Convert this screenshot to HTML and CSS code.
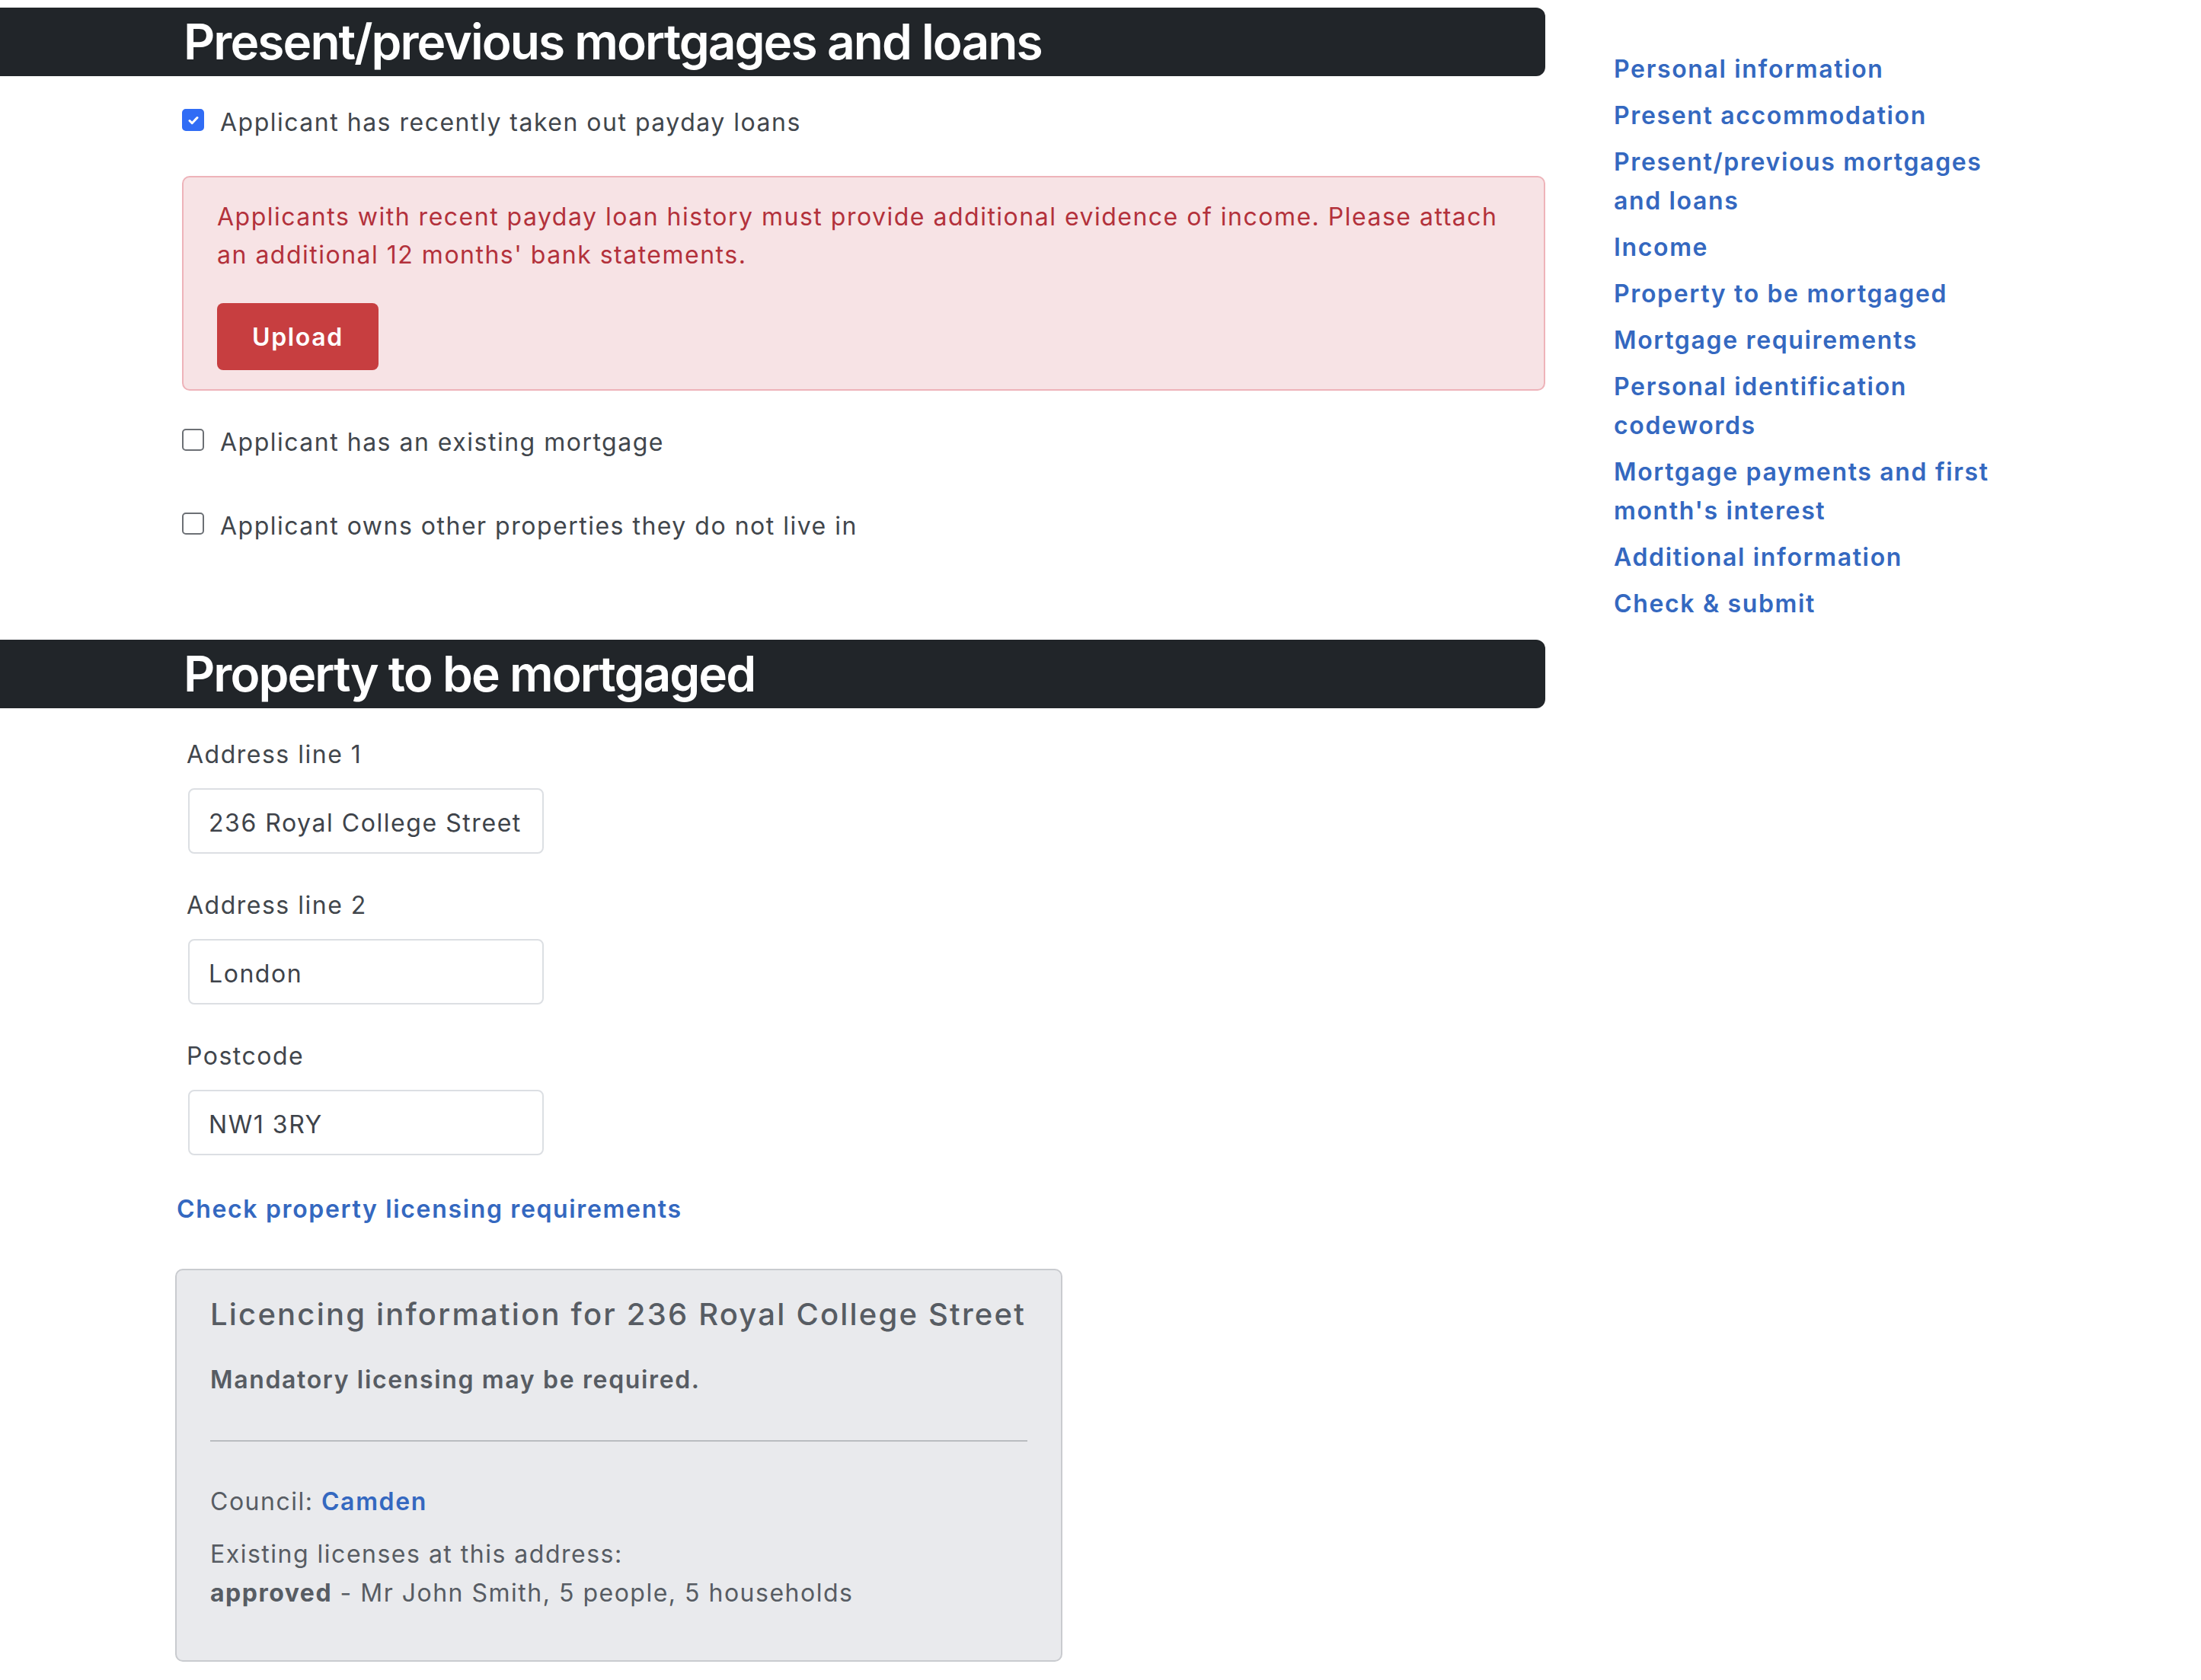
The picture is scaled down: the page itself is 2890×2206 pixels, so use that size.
FILE: index.html
```html
<!DOCTYPE html>
<html lang="en">
<head>
<meta charset="utf-8">
<title>Mortgage application</title>
<link rel="stylesheet" href="styles.css">
</head>
<body>
<div class="page">
  <main class="main">
    <section class="section">
      <h2 class="section-title">Present/previous mortgages and loans</h2>
      <div class="section-body">
        <label class="check check-first">
          <span class="box box-on"><svg viewBox="0 0 20 20" width="20" height="20"><path d="M5 10.5l3.2 3.2L15 6.5" fill="none" stroke="#fff" stroke-width="3" stroke-linecap="round" stroke-linejoin="round"/></svg></span>
          <span class="check-text">Applicant has recently taken out payday loans</span>
        </label>
        <div class="alert">
          <p class="alert-text">Applicants with recent payday loan history must provide additional evidence of income. Please attach an additional 12 months' bank statements.</p>
          <button class="btn-upload" type="button">Upload</button>
        </div>
        <label class="check check-second">
          <span class="box"></span>
          <span class="check-text">Applicant has an existing mortgage</span>
        </label>
        <label class="check check-third">
          <span class="box"></span>
          <span class="check-text">Applicant owns other properties they do not live in</span>
        </label>
      </div>
    </section>

    <section class="section section-property">
      <h2 class="section-title">Property to be mortgaged</h2>
      <div class="property-body">
        <div class="fields">
          <div class="field">
            <label class="field-label">Address line 1</label>
            <input class="field-input" type="text" value="236 Royal College Street">
          </div>
          <div class="field">
            <label class="field-label">Address line 2</label>
            <input class="field-input" type="text" value="London">
          </div>
          <div class="field">
            <label class="field-label">Postcode</label>
            <input class="field-input" type="text" value="NW1 3RY">
          </div>
        </div>
        <a class="licence-link" href="#">Check property licensing requirements</a>
        <div class="card">
          <h3 class="card-title">Licencing information for 236 Royal College Street</h3>
          <p class="card-sub">Mandatory licensing may be required.</p>
          <hr class="card-rule">
          <p class="card-council">Council: <a class="card-link" href="#">Camden</a></p>
          <p class="card-existing">Existing licenses at this address:<br><strong class="card-strong">approved</strong> - Mr John Smith, 5 people, 5 households</p>
        </div>
      </div>
    </section>
  </main>

  <nav class="sidebar">
    <a class="side-link" href="#">Personal information</a>
    <a class="side-link" href="#">Present accommodation</a>
    <a class="side-link" href="#">Present/previous mortgages and loans</a>
    <a class="side-link" href="#">Income</a>
    <a class="side-link" href="#">Property to be mortgaged</a>
    <a class="side-link" href="#">Mortgage requirements</a>
    <a class="side-link" href="#">Personal identification codewords</a>
    <a class="side-link" href="#">Mortgage payments and first month's interest</a>
    <a class="side-link" href="#">Additional information</a>
    <a class="side-link" href="#">Check &amp; submit</a>
  </nav>
</div>
</body>
</html>
```

FILE: styles.css
```css
* { box-sizing: border-box; }

body {
  margin: 0;
  background: #ffffff;
  font-family: Inter, "Noto Sans", sans-serif;
  font-size: 32px;
  line-height: 51px;
  letter-spacing: 1.5px;
  color: #41464c;
}

.page {
  display: flex;
  align-items: flex-start;
}

.main {
  flex: none;
  width: 2029px;
  padding-top: 10px;
}

.section-title {
  margin: 0;
  height: 90px;
  line-height: 90px;
  padding-left: 241px;
  background: #212529;
  color: #ffffff;
  font-size: 64px;
  font-weight: 600;
  letter-spacing: -1.95px;
  border-radius: 0 12px 12px 0;
}

.section-body {
  padding-left: 239px;
}

.check {
  display: flex;
  align-items: flex-start;
  gap: 21px;
  cursor: pointer;
}

.box {
  flex: none;
  width: 29px;
  height: 29px;
  margin-top: 8px;
  border: 2px solid #6c7075;
  border-radius: 5px;
  background: #ffffff;
  display: flex;
  align-items: center;
  justify-content: center;
}

.box-on {
  background: #306cf5;
  border-color: #306cf5;
}

.check-first { margin-top: 35px; }
.check-second { margin-top: 42px; }
.check-third { margin-top: 59px; }

.alert {
  margin-top: 45px;
  border: 2px solid #eeb3b9;
  border-radius: 10px;
  background: #f7e3e5;
  padding: 27px 44px 25px;
  color: #b3313b;
}

.alert-text {
  margin: 0;
  line-height: 50px;
}

.btn-upload {
  display: block;
  margin-top: 38px;
  height: 88px;
  padding: 0 46px;
  border: none;
  border-radius: 8px;
  background: #c73e40;
  color: #ffffff;
  font-family: inherit;
  font-size: 32px;
  font-weight: 600;
  letter-spacing: 1.65px;
}

.section-property {
  margin-top: 124px;
}

.property-body {
  padding-left: 230px;
}

.fields {
  padding-left: 15px;
  padding-top: 35px;
}

.field + .field {
  margin-top: 42px;
}

.field-label {
  display: block;
  margin-bottom: 19px;
}

.field-input {
  display: block;
  width: 467px;
  height: 86px;
  margin-left: 2px;
  padding: 4px 25px 0;
  border: 2px solid #dcdfe3;
  border-radius: 8px;
  font-family: inherit;
  font-size: 32px;
  letter-spacing: 1.55px;
  color: #3e434a;
  background: #ffffff;
}

.licence-link {
  display: block;
  width: max-content;
  margin-top: 45px;
  margin-left: 2px;
  color: #3468c0;
  font-weight: 600;
  letter-spacing: 1.65px;
  text-decoration: none;
}

.card {
  width: 1165px;
  margin-top: 53px;
  padding: 34px 44px 63px;
  border: 2px solid #c9cbcf;
  border-radius: 10px;
  background: #e9eaed;
  color: #575c63;
}

.card-title {
  margin: 0;
  font-size: 40px;
  line-height: 48px;
  font-weight: 500;
  letter-spacing: 2.2px;
  white-space: nowrap;
}

.card-sub {
  margin: 36px 0 0;
  font-weight: 600;
  letter-spacing: 1.65px;
}

.card-rule {
  margin: 54px 0 0;
  border: none;
  border-top: 2px solid #b9bcc0;
}

.card-council {
  margin: 53px 0 0;
}

.card-link {
  color: #3468c0;
  font-weight: 600;
  letter-spacing: 1.65px;
  text-decoration: none;
}

.card-existing {
  margin: 18px 0 0;
}

.card-strong {
  font-weight: 700;
}

.sidebar {
  flex: none;
  width: 530px;
  margin-left: 90px;
  padding-top: 65px;
  display: flex;
  flex-direction: column;
  gap: 10px;
}

.side-link {
  display: block;
  color: #3468c0;
  font-weight: 600;
  letter-spacing: 1.65px;
  text-decoration: none;
}
```
